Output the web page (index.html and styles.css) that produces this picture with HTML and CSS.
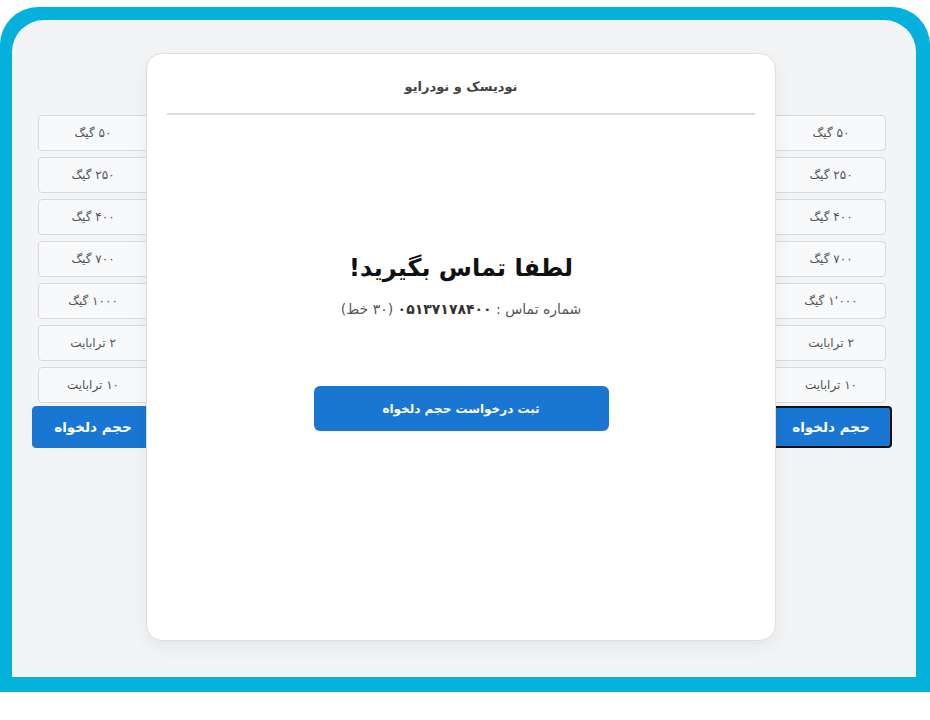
FILE: index.html
```html
<!DOCTYPE html>
<html lang="fa" dir="rtl">
<head>
<meta charset="utf-8">
<title>نودیسک و نودرایو</title>
<link rel="stylesheet" href="styles.css">
</head>
<body>
<div class="frame">
  <div class="screen">
    <div class="columns">
      <div class="col col-right">
        <button class="size">۵۰ گیگ</button>
        <button class="size">۲۵۰ گیگ</button>
        <button class="size">۴۰۰ گیگ</button>
        <button class="size">۷۰۰ گیگ</button>
        <button class="size">۱٬۰۰۰ گیگ</button>
        <button class="size">۲ ترابایت</button>
        <button class="size">۱۰ ترابایت</button>
        <button class="custom focused">حجم دلخواه</button>
      </div>
      <div class="col col-left">
        <button class="size">۵۰ گیگ</button>
        <button class="size">۲۵۰ گیگ</button>
        <button class="size">۴۰۰ گیگ</button>
        <button class="size">۷۰۰ گیگ</button>
        <button class="size">۱۰۰۰ گیگ</button>
        <button class="size">۲ ترابایت</button>
        <button class="size">۱۰ ترابایت</button>
        <button class="custom">حجم دلخواه</button>
      </div>
    </div>
    <div class="modal">
      <div class="modal-head">نودیسک و نودرایو</div>
      <div class="modal-body">
        <h1 class="title">لطفا تماس بگیرید!</h1>
        <p class="phone">شماره تماس : <b>۰۵۱۳۷۱۷۸۴۰۰</b> (۳۰ خط)</p>
        <button class="submit">ثبت درخواست حجم دلخواه</button>
      </div>
    </div>
  </div>
</div>
</body>
</html>
```
FILE: styles.css
```css
html, body {
  margin: 0;
  padding: 0;
  background: #ffffff;
  font-family: "DejaVu Sans", "Noto Sans", sans-serif;
}
.frame {
  margin-top: 7px;
  height: 685px;
  box-sizing: border-box;
  background: #03b1da;
  border-radius: 38px 38px 0 0;
  padding: 13px 14px 15px 12px;
}
.screen {
  position: relative;
  height: 100%;
  background: #f3f4f6;
  border-radius: 32px 32px 0 0;
}
.columns {
  display: flex;
  justify-content: space-between;
  padding: 95px 30px 0 26px;
}
.col {
  display: flex;
  flex-direction: column;
  gap: 6px;
  width: 140px;
}
.size {
  height: 36px;
  background: #f8f9fa;
  border: 1px solid #d9d9d9;
  border-radius: 4px;
  font-family: inherit;
  font-size: 12px;
  color: #555;
  padding: 0;
  box-sizing: border-box;
}
.col-right .size { padding-left: 30px; }
.col-left .size { padding-right: 30px; }
.custom {
  height: 42px;
  margin-top: -3px;
  background: #1976d2;
  color: #fff;
  border: 1px solid #1976d2;
  border-radius: 4px;
  font-family: inherit;
  font-weight: bold;
  font-size: 13.5px;
  box-sizing: border-box;
}
.col-right .custom { margin-right: -6px; padding-left: 30px; }
.col-left .custom { margin-left: -6px; padding-right: 30px; }
.custom.focused { border: 2px solid #111; }
.modal {
  position: absolute;
  left: 134px;
  top: 33px;
  width: 630px;
  height: 588px;
  box-sizing: border-box;
  background: #fff;
  border: 1px solid #dedede;
  border-radius: 16px;
  box-shadow: 0 6px 18px rgba(0,0,0,0.06);
  padding: 0 20px;
}
.modal-head {
  height: 61px;
  box-sizing: border-box;
  padding-top: 25px;
  text-align: center;
  font-size: 13px;
  font-weight: bold;
  color: #444;
  border-bottom: 2px solid #dcdcdc;
}
.modal-body {
  display: flex;
  flex-direction: column;
  align-items: center;
}
.title {
  margin: 135px 0 0;
  font-size: 24px;
  line-height: 36px;
  font-weight: bold;
  color: #111;
}
.phone {
  margin: 11px 0 0;
  font-size: 14px;
  line-height: 24px;
  color: #555;
}
.phone b { color: #333; }
.submit {
  margin-top: 65px;
  width: 295px;
  height: 45px;
  background: #1976d2;
  color: #fff;
  border: none;
  border-radius: 6px;
  font-family: inherit;
  font-weight: bold;
  font-size: 12px;
}
```
